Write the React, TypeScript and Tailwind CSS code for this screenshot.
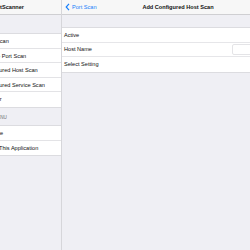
import React from 'react';

const leftMain = ['Host Scan', 'Simple Port Scan', 'Configured Host Scan', 'Configured Service Scan', 'Monitor'];
const leftOther = ['Website', 'About This Application'];

function Row({ label, last }: { label: string; last?: boolean }) {
  return (
    <div className="h-[14.6px] flex items-center pl-[27px] relative">
      <span className="text-[5.6px] text-[#111] whitespace-nowrap">{label}</span>
      {!last && <div className="absolute bottom-0 left-[27px] right-0 h-px bg-[#e3e3e6]" />}
    </div>
  );
}

export default function App() {
  return (
    <div
      className="w-[250px] h-[250px] overflow-hidden flex bg-[#efeff4]"
      style={{ fontFamily: '"Liberation Sans", Arial, sans-serif' }}
    >
      {/* master pane, cut off on the left */}
      <div className="w-[106px] -ml-[44px] shrink-0 flex flex-col border-r border-[#d6d6da]">
        <div className="h-[15px] bg-[#f7f7f7] border-b border-[#cfcfd2] flex items-center justify-center">
          <span className="text-[5.6px] font-bold text-[#111]">NetScanner</span>
        </div>
        <div className="h-[18px]" />
        <div className="bg-white border-y border-[#dcdce0]">
          {leftMain.map((l, i) => (
            <Row key={l} label={l} last={i === leftMain.length - 1} />
          ))}
        </div>
        <div className="h-[17px] flex items-end pl-[27px] pb-[3px]">
          <span className="text-[4.6px] text-[#6d6d72]">APP MENU</span>
        </div>
        <div className="bg-white border-y border-[#dcdce0]">
          {leftOther.map((l, i) => (
            <Row key={l} label={l} last={i === leftOther.length - 1} />
          ))}
        </div>
      </div>

      {/* detail pane */}
      <div className="w-[232px] shrink-0 flex flex-col">
        <div className="h-[15px] bg-[#f7f7f7] border-b border-[#cfcfd2] flex items-center relative">
          <div className="flex items-center pl-[3px] gap-[2px] text-[#157efb]">
            <svg width="5" height="8" viewBox="0 0 5 8">
              <path d="M4 0.8 L1.2 4 L4 7.2" fill="none" stroke="#157efb" strokeWidth="1.2" />
            </svg>
            <span className="text-[5.6px]">Port Scan</span>
          </div>
          <span className="absolute inset-x-0 text-center text-[5.6px] font-bold text-[#111]">
            Add Configured Host Scan
          </span>
        </div>
        <div className="h-[12px]" />
        <div className="bg-white border-y border-[#dcdce0]">
          <div className="h-[14.5px] flex items-center pl-[2px] border-b border-[#e6e6e9]">
            <span className="text-[5.6px] text-[#111]">Active</span>
          </div>
          <div className="h-[14.5px] flex items-center pl-[2px] border-b border-[#e6e6e9]">
            <span className="text-[5.6px] text-[#111] flex-1">Host Name</span>
            <div className="w-[60px] h-[11px] mr-[2px] border border-[#e4e4e7] rounded-[2px] bg-white" />
          </div>
          <div className="h-[14.5px] flex items-center pl-[2px]">
            <span className="text-[5.6px] text-[#111]">Select Setting</span>
          </div>
        </div>
      </div>
    </div>
  );
}
